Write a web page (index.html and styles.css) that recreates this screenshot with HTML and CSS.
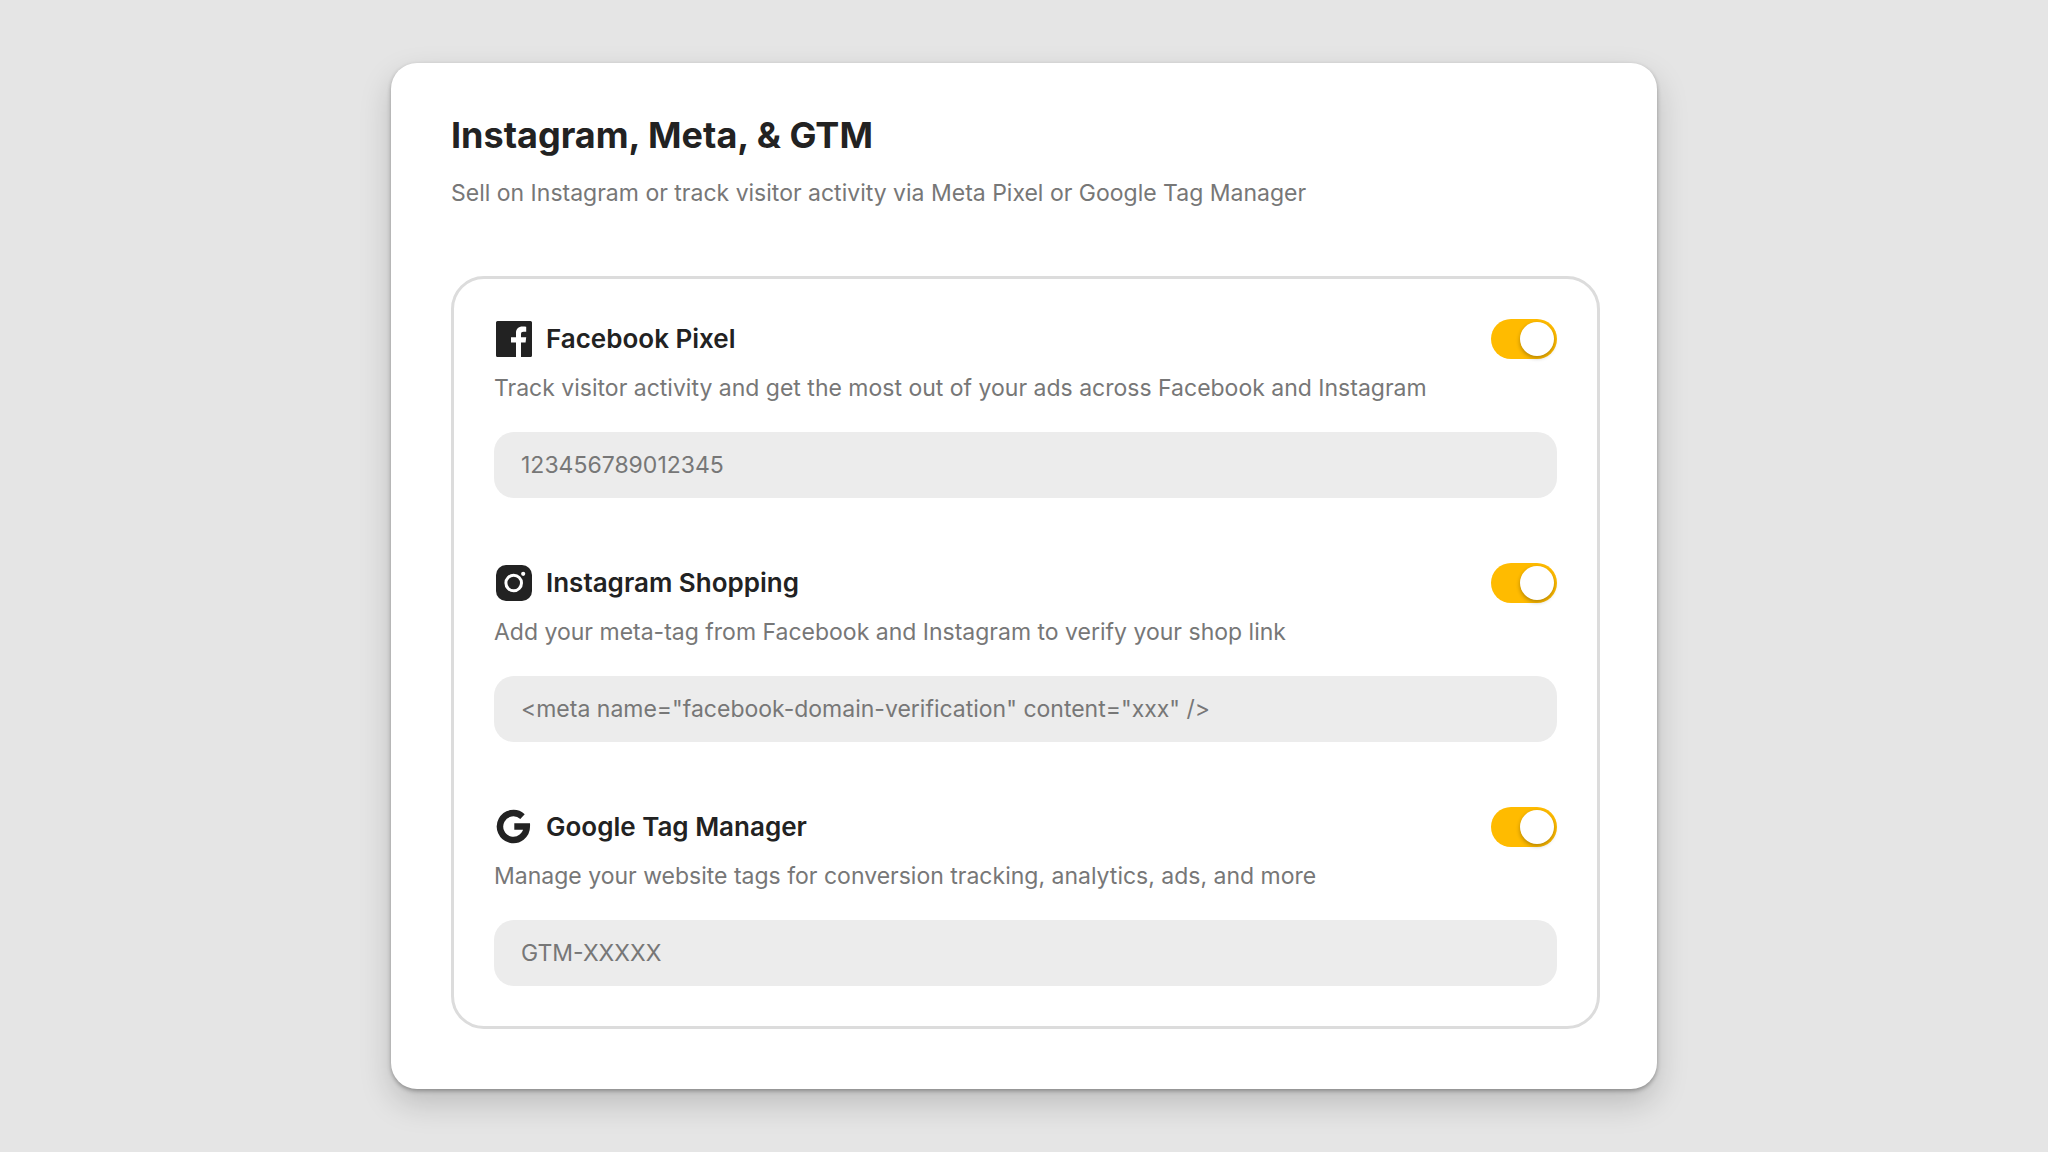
FILE: index.html
```html
<!DOCTYPE html>
<html lang="en">
<head>
    <meta charset="UTF-8">
    <meta name="viewport" content="width=device-width, initial-scale=1.0">
    <title>Instagram, Meta, &amp; GTM</title>
    <link rel="stylesheet" href="styles.css">
</head>
<body>
    <main class="card">
        <h1 class="card-title">Instagram, Meta, &amp; GTM</h1>
        <p class="card-text">Sell on Instagram or track visitor activity via Meta Pixel or Google Tag Manager</p>

        <form class="panel">
            <section class="setting">
                <div class="setting-head">
                    <svg class="icon" viewBox="0 0 36 36" aria-hidden="true">
                        <path fill-rule="evenodd" d="M1.500 0H34.500a1.500 1.500 0 0 1 1.500 1.500V34.500a1.500 1.500 0 0 1-1.500 1.500H25V21.500h4.600l.6-5.200H25v-3.100c0-1.800.8-2.500 2.500-2.500h2.700V5.800c-1-.2-2.300-.3-3.600-.3-4.200 0-6.600 2.400-6.600 6.600v4.200h-5v5.200h5V36H1.500a1.500 1.500 0 0 1-1.500-1.500V1.500a1.500 1.500 0 0 1 1.500-1.500z"/>
                    </svg>
                    <label class="setting-title" for="pixel-id">Facebook Pixel</label>
                    <input type="checkbox" class="switch" aria-label="Facebook Pixel on" checked>
                </div>
                <p class="setting-text">Track visitor activity and get the most out of your ads across Facebook and Instagram</p>
                <input type="text" class="field" id="pixel-id" placeholder="123456789012345">
            </section>

            <section class="setting">
                <div class="setting-head">
                    <svg class="icon" viewBox="0 0 36 36" aria-hidden="true">
                        <rect width="36" height="36" rx="10"/>
                        <circle class="lens" cx="17.700" cy="18" r="7.800"/>
                        <circle class="dot" cx="27.200" cy="8.800" r="2.100"/>
                    </svg>
                    <label class="setting-title" for="meta-tag">Instagram Shopping</label>
                    <input type="checkbox" class="switch" aria-label="Instagram Shopping on" checked>
                </div>
                <p class="setting-text">Add your meta-tag from Facebook and Instagram to verify your shop link</p>
                <input type="text" class="field" id="meta-tag" placeholder='&lt;meta name="facebook-domain-verification" content="xxx" /&gt;'>
            </section>

            <section class="setting">
                <div class="setting-head">
                    <svg class="icon" viewBox="0 0 36 36" aria-hidden="true">
                        <path class="google" d="M26.500 7.700A13.400 13.400 0 1 0 30.800 17.500H18.300"/>
                    </svg>
                    <label class="setting-title" for="gtm-id">Google Tag Manager</label>
                    <input type="checkbox" class="switch" aria-label="Google Tag Manager on" checked>
                </div>
                <p class="setting-text">Manage your website tags for conversion tracking, analytics, ads, and more</p>
                <input type="text" class="field" id="gtm-id" placeholder="GTM-XXXXX">
            </section>
        </form>
    </main>
</body>
</html>
```
FILE: styles.css
```css
* { box-sizing: border-box; }
body {
    margin: 0;
    min-height: 100vh;
    display: flex;
    align-items: center;
    justify-content: center;
    background-color: #e5e5e5;
    color: #222;
    font-family: Inter, "Liberation Sans", sans-serif;
}
.card {
    width: 100%;
    max-width: 1266px;
    padding: 48px 57px 60px 60px;
    border-radius: 26px;
    background-color: #fff;
    box-shadow: 0 2px 4px rgba(0,0,0,.3), 0 14px 32px rgba(0,0,0,.18);
}
.card-title {
    margin: 0;
    font-size: 36px;
    font-weight: 700;
    line-height: 48px;
}
.card-text, .setting-text {
    margin: 0;
    color: #777;
    font-size: 23px;
    line-height: 32px;
}
.card-text {
    margin: 18px 0 67px;
}
.panel {
    display: flex;
    flex-direction: column;
    gap: 65px;
    padding: 40px;
    border: 3px solid #dcdcdc;
    border-radius: 33px;
}
.setting-head {
    display: flex;
    align-items: center;
    gap: 14px;
    height: 40px;
}
.icon {
    width: 36px;
    height: 36px;
    margin-left: 2px;
    fill: #222;
}
.lens {
    fill: none;
    stroke: #fff;
    stroke-width: 3;
}
.dot {
    fill: #fff;
}
.google {
    fill: none;
    stroke: #222;
    stroke-width: 6.5;
}
.setting-title {
    flex: 1;
    font-size: 26px;
    font-weight: 600;
    line-height: 32px;
}
.switch {
    appearance: none;
    width: 66px;
    height: 40px;
    margin: 0;
    padding: 3px;
    border-radius: 20px;
    background-color: #ccc;
    cursor: pointer;
}
.switch::before {
    content: "";
    display: block;
    width: 34px;
    height: 34px;
    border-radius: 50%;
    background-color: #fff;
    box-shadow: 0 2px 4px rgba(0,0,0,.3);
}
.switch:checked {
    background-color: #ffbb00;
}
.switch:checked::before {
    margin-left: auto;
}
.setting-text {
    margin: 13px 0 28px;
}
.field {
    display: block;
    width: 100%;
    height: 66px;
    padding: 0 27px;
    border: 0;
    border-radius: 20px;
    background-color: #ececec;
    color: #222;
    font-family: inherit;
    font-size: 23px;
}
.field::placeholder {
    color: #777;
    opacity: 1;
}
```
